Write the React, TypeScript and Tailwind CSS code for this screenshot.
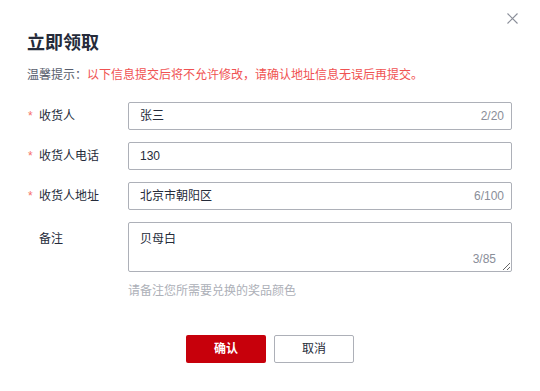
const font = { fontFamily: '"Liberation Sans", "Noto Sans CJK SC", sans-serif' };

function Label({ text, required }: { text: string; required?: boolean }) {
  return (
    <div className="flex w-[101px] shrink-0 items-center text-[12px] leading-[18px] text-[#252b3a]">
      <span className="w-[12px] pl-[1px] text-[#f66f6a]">{required ? '*' : ''}</span>
      <span>{text}</span>
    </div>
  );
}

function Field({ label, value, count }: { label: string; value: string; count?: string }) {
  return (
    <div className="flex h-[28px] items-center">
      <Label text={label} required />
      <div className="flex h-[28px] w-[384px] items-center rounded-[2px] border border-[#adb0b8] bg-white pl-[11px] pr-[7px]">
        <input
          defaultValue={value}
          className="min-w-0 flex-1 bg-transparent text-[12px] text-[#252b3a] outline-none"
          style={font}
        />
        {count && <span className="text-[12px] text-[#8a8e99]">{count}</span>}
      </div>
    </div>
  );
}

export default function App() {
  return (
    <div className="relative h-[391px] w-[540px] overflow-hidden bg-white px-[27px]" style={font}>
      <button className="absolute right-[22px] top-[13px] h-[11px] w-[11px] text-[#8a8e99]">
        <svg viewBox="0 0 11 11" className="h-[11px] w-[11px]" fill="none" stroke="currentColor" strokeWidth="1.1">
          <path d="M0.5 0.5 L10.5 10.5 M10.5 0.5 L0.5 10.5" />
        </svg>
      </button>

      <h2 className="mt-[31px] text-[18px] font-bold leading-[24px] text-[#252b3a]">立即领取</h2>
      <p className="mt-[11px] text-[12px] leading-[18px] text-[#575d6c]">
        温馨提示：<span className="text-[#f05252]">以下信息提交后将不允许修改，请确认地址信息无误后再提交。</span>
      </p>

      <div className="mt-[18px] flex flex-col gap-[12px]">
        <Field label="收货人" value="张三" count="2/20" />
        <Field label="收货人电话" value="130" />
        <Field label="收货人地址" value="北京市朝阳区" count="6/100" />

        <div className="flex items-start">
          <div className="pt-[8px]">
            <Label text="备注" />
          </div>
          <div className="flex flex-col">
            <div className="relative h-[50px] w-[384px]">
              <textarea
                defaultValue="贝母白"
                className="block h-[50px] w-[384px] resize-y rounded-[2px] border border-[#adb0b8] px-[11px] py-[7px] text-[12px] leading-[18px] text-[#252b3a] outline-none"
                style={font}
              />
              <span className="absolute bottom-[6px] right-[16px] text-[12px] leading-[14px] text-[#8a8e99]">3/85</span>
            </div>
            <div className="mt-[10px] text-[12px] leading-[18px] text-[#adb0b8]">请备注您所需要兑换的奖品颜色</div>
          </div>
        </div>
      </div>

      <div className="mt-[35px] flex justify-center gap-[8px]">
        <button className="h-[28px] w-[80px] rounded-[2px] bg-[#c7000b] text-[12px] font-bold text-white">确认</button>
        <button className="h-[28px] w-[80px] rounded-[2px] border border-[#adb0b8] bg-white text-[12px] text-[#252b3a]">取消</button>
      </div>
    </div>
  );
}
